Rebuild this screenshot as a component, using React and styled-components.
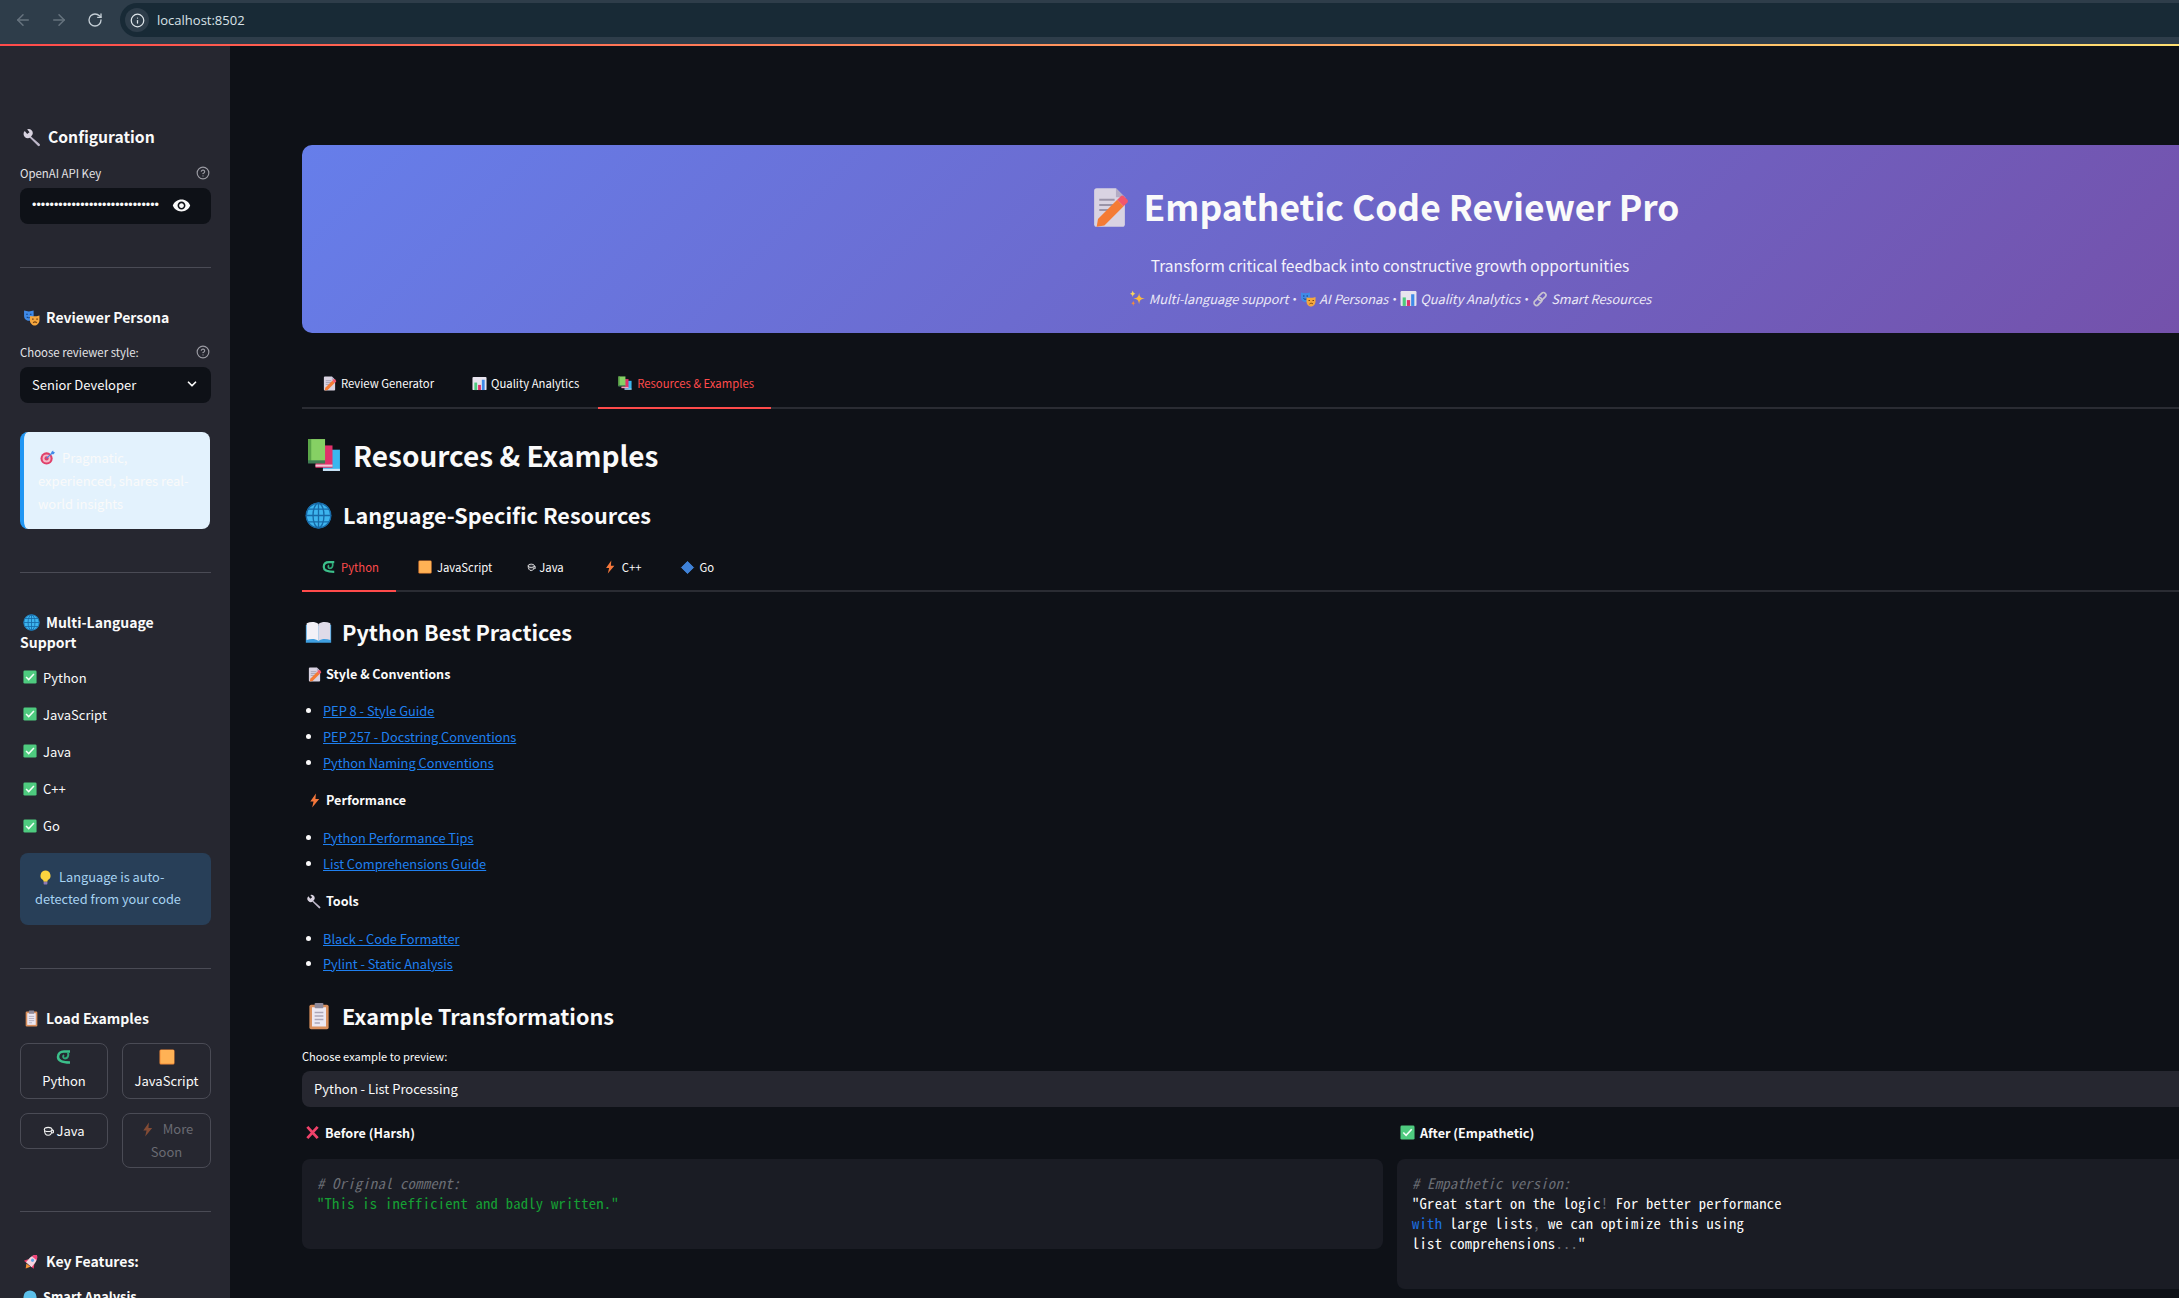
import React from 'react'
import styled, { createGlobalStyle } from 'styled-components'
import { ArrowLeft, ArrowRight, RotateCw, Info, CircleHelp, ChevronDown } from 'lucide-react'
import { MdVisibility } from 'react-icons/md'

const GlobalStyle = createGlobalStyle`
    html, body {
        margin: 0;
        padding: 0;
        height: 100%;
        overflow: hidden;
        background: #0e1117;
    }
    body {
        font-family: "Noto Sans CJK SC", "Noto Sans", sans-serif;
        color: #fafafa;
    }
    * {
        box-sizing: border-box;
    }
`

const Page = styled.div`
    width: 2179px;
    height: 1298px;
    display: flex;
    flex-direction: column;
    overflow: hidden;
`

/* browser chrome */
const Chrome = styled.div`
    height: 44px;
    flex: none;
    display: flex;
    align-items: flex-start;
    padding: 3px 0 0 5px;
    background: #2e3d4a;
`
const NavButton = styled.div`
    width: 36px;
    height: 34px;
    display: flex;
    align-items: center;
    justify-content: center;
    color: ${p => (p.$dim ? '#66737e' : '#c4ced5')};
`
const AddressBar = styled.div`
    flex: 1;
    height: 34px;
    margin-left: 7px;
    display: flex;
    align-items: center;
    gap: 8px;
    padding-left: 5px;
    border-radius: 17px 0 0 17px;
    background: #182a36;
    color: #d8e2e8;
    font-family: "Open Sans", sans-serif;
    font-size: 13px;
`
const SiteInfo = styled.div`
    width: 24px;
    height: 24px;
    border-radius: 50%;
    display: flex;
    align-items: center;
    justify-content: center;
    background: #2e3d4a;
    color: #dfe6ea;
`
const Decoration = styled.div`
    height: 2px;
    flex: none;
    background: linear-gradient(90deg, #ff4b4b, #ffe072);
`

const Body = styled.div`
    flex: 1;
    display: flex;
    min-height: 0;
`

/* sidebar */
const Sidebar = styled.aside`
    width: 230px;
    flex: none;
    padding: 81px 19px 0 20px;
    overflow: hidden;
    background: #262730;
`
const SideHeading = styled.div`
    font-size: ${p => p.$size || 14}px;
    line-height: 20px;
    font-weight: 700;
`
const LabelRow = styled.div`
    display: flex;
    align-items: center;
    justify-content: space-between;
    height: 16px;
    margin-top: ${p => p.$top || 17}px;
    padding-right: 1px;
    font-size: 11.4px;
    color: #e3e3e6;
    svg {
        color: #9b9ba3;
    }
`
const DarkField = styled.div`
    height: 36px;
    margin-top: 7px;
    display: flex;
    align-items: center;
    justify-content: space-between;
    padding: 0 ${p => p.$right || 12}px 2px 12px;
    border-radius: 8px;
    background: #0e1117;
    font-size: 13px;
`
const Dots = styled.span`
    width: 127px;
    overflow: hidden;
    white-space: nowrap;
    font-family: "Liberation Sans", sans-serif;
    font-size: 12.5px;
`
const Rule = styled.hr`
    height: 1px;
    margin: 43px 0 39px;
    border: 0;
    background: #4a4b55;
`
const PersonaCard = styled.div`
    margin: 29px 1px 1px 0;
    padding: 14px;
    border-left: 4px solid #2196f3;
    border-radius: 8px;
    background: #e3f2fd;
    color: #fafafa;
    font-size: 13px;
    line-height: 23px;
`
const LanguageList = styled.div`
    display: flex;
    flex-direction: column;
    gap: 17.2px;
    margin-top: 15px;
`
const LanguageRow = styled.div`
    display: flex;
    align-items: center;
    height: 20px;
    padding-left: 3px;
    gap: 6px;
    font-size: 13px;
`
const InfoBox = styled.div`
    margin-top: 17px;
    height: 72px;
    padding: 13px 15px;
    border-radius: 8px;
    background: #283f58;
    color: #a7d3f2;
    font-size: 12.8px;
    line-height: 22px;
`
const ButtonGrid = styled.div`
    display: grid;
    grid-template-columns: 88px 89px;
    gap: 14px;
    align-items: start;
    margin-top: 15px;
`
const SideButton = styled.div`
    display: flex;
    flex-direction: column;
    align-items: center;
    justify-content: center;
    min-height: ${p => p.$height}px;
    border: 1px solid #4a4b55;
    border-radius: 8px;
    color: ${p => (p.$disabled ? '#6a6b73' : '#fafafa')};
    font-size: 13px;
    line-height: 23px;
    text-align: center;
`
const ButtonIcon = styled.div`
    height: 16px;
    margin-bottom: 4px;
    line-height: 0;
`
const FeatureRow = styled.div`
    margin-top: 16px;
    font-size: 12.8px;
    font-weight: 700;
    line-height: 20px;
`

/* main column */
const Main = styled.main`
    flex: 1;
    min-width: 0;
    overflow: hidden;
    padding: 99px 0 0 72px;
`
const Content = styled.div`
    width: 2176px;
`
const Hero = styled.header`
    height: 188px;
    padding-top: 37px;
    border-radius: 10px;
    background: linear-gradient(135deg, #667eea 0%, #764ba2 100%);
    text-align: center;
`
const HeroTitle = styled.h1`
    margin: 0;
    padding-right: 12px;
    font-size: 35.4px;
    line-height: 48px;
    font-weight: 700;
`
const HeroSub = styled.p`
    margin: 23px 0 0;
    font-size: 15.5px;
    line-height: 24px;
    color: #f4f2fb;
`
const HeroFeatures = styled.p`
    margin: 12px 0 0;
    font-size: 12.8px;
    line-height: 20px;
    font-style: italic;
    color: #ece9f7;
`
const Separator = styled.span`
    display: inline-block;
    width: 12px;
    text-align: center;
    font-style: normal;
`
const TabBar = styled.nav`
    display: flex;
    gap: 2px;
    height: ${p => p.$height}px;
    margin-top: ${p => p.$top}px;
    border-bottom: 2px solid #2a2c33;
`
const Tab = styled.div`
    height: calc(100% + 2px);
    display: flex;
    align-items: center;
    padding: 0 17px 0 ${p => p.$left || 20}px;
    border-bottom: 2px solid ${p => (p.$active ? '#ff4b4b' : 'transparent')};
    color: ${p => (p.$active ? '#ff4b4b' : '#fafafa')};
    font-size: 11.3px;
    white-space: nowrap;
`
const PageTitle = styled.h1`
    margin: 24px 0 0 5px;
    font-size: 28px;
    line-height: 44px;
    font-weight: 700;
`
const SectionTitle = styled.h2`
    margin: ${p => p.$top}px 0 0 3px;
    font-size: ${p => p.$size}px;
    line-height: ${p => p.$line}px;
    font-weight: 700;
`
const GroupTitle = styled.h4`
    margin: ${p => p.$top}px 0 0 5px;
    font-size: 12.6px;
    line-height: 20px;
    font-weight: 700;
`
const Links = styled.ul`
    display: flex;
    flex-direction: column;
    gap: ${p => p.$gap || 6}px;
    margin: ${p => p.$top}px 0 0;
    padding-left: 21px;
    list-style: disc;
`
const LinkItem = styled.li`
    font-size: 12.8px;
    line-height: 20px;
    a {
        color: #1f80f0;
    }
`
const PreviewLabel = styled.label`
    display: block;
    margin-top: 16px;
    font-size: 11.1px;
    line-height: 16px;
`
const PreviewSelect = styled.div`
    height: 36px;
    margin-top: 7px;
    display: flex;
    align-items: center;
    padding: 0 0 2px 12px;
    border-radius: 8px;
    background: #262730;
    font-size: 13px;
`
const Columns = styled.div`
    display: grid;
    grid-template-columns: 1081px 1081px;
    gap: 14px;
    align-items: start;
    margin-top: 16px;
`
const ColumnTitle = styled.div`
    padding-left: 3px;
    font-size: 12.6px;
    line-height: 20px;
    font-weight: 700;
`
const CodeBlock = styled.pre`
    margin: 16px 0 0;
    padding: 14px 15px 36px;
    border-radius: 8px;
    background: #1a1c24;
    font-family: "Noto Sans Mono CJK SC", "DejaVu Sans Mono", monospace;
    font-size: 14.6px;
    letter-spacing: 0.25px;
    line-height: 20px;
    color: #fafafa;
`
const Comment = styled.span`
    font-style: italic;
    color: #6b6e75;
`
const Str = styled.span`
    color: #16a034;
`
const Keyword = styled.span`
    color: #1c6fe0;
`
const Punct = styled.span`
    color: #6b6e75;
`

/* emoji drawings */
const Glyph = styled.svg`
    display: inline-block;
    flex: none;
    width: ${p => p.$size}px;
    height: ${p => p.$size}px;
    margin-left: ${p => p.$lead || 0}px;
    margin-right: ${p => p.$gap || 0}px;
    vertical-align: ${p => p.$drop ?? -2}px;
    opacity: ${p => p.$fade || 1};
`
const emoji = shapes => ({ size = 14, gap, drop, fade, lead }) => (
    <Glyph viewBox="0 0 32 32" $size={size} $gap={gap} $drop={drop} $fade={fade} $lead={lead}>
        {shapes}
    </Glyph>
)

const Memo = emoji(<>
    <path d="M6 1h15l7 7v21a2 2 0 0 1-2 2H6a2 2 0 0 1-2-2V3a2 2 0 0 1 2-2z" fill="#d9d3e2" />
    <path d="M21 1l7 7h-7z" fill="#b3abc4" />
    <path d="M8 10h12M8 14h13M8 18h9" stroke="#9a94a8" strokeWidth="1.6" />
    <path d="M7 25l15-15 5 5-15 15-6 1z" fill="#f47b35" />
    <path d="M22 10l3-3a1.5 1.5 0 0 1 2 0l3 3a1.5 1.5 0 0 1 0 2l-3 3z" fill="#f2566c" />
</>)
const Wrench = emoji(<>
    <path d="M13 14l15 13a2 2 0 0 1-3 3L11 16z" fill="#bdb7c9" />
    <path d="M3 5l4 5 4-3-4-5a7 7 0 0 1 9 9l-3 4a7 7 0 0 1-10-10z" fill="#d8d3e0" />
</>)
const Masks = emoji(<>
    <path d="M2 3c6 2 12 2 18 0v10c0 6-5 9-9 9s-9-3-9-9z" fill="#3f8ae8" />
    <path d="M6 10h3M13 10h3M7 15c2 2 6 2 8 0" stroke="#123f7a" strokeWidth="2" fill="none" />
    <path d="M13 13c6 1 12 1 18-1v9c0 6-5 10-9 10s-9-4-9-10z" fill="#f6a73e" />
    <path d="M17 19h3M25 19h3M19 26c2-2 5-2 7 0" stroke="#7a4510" strokeWidth="2" fill="none" />
</>)
const Target = emoji(<>
    <circle cx="14" cy="18" r="13" fill="#e0406a" />
    <circle cx="14" cy="18" r="8.5" fill="#f5b9c8" />
    <circle cx="14" cy="18" r="4.5" fill="#e0406a" />
    <path d="M14 18L27 5" stroke="#3f8ae8" strokeWidth="2.5" />
    <path d="M24 4l4-3 1 3 3 1-3 4h-4z" fill="#3f8ae8" />
</>)
const Globe = emoji(<>
    <circle cx="16" cy="16" r="15" fill="#3db4ee" />
    <g stroke="#176aa8" strokeWidth="1.6" fill="none">
        <circle cx="16" cy="16" r="14.5" />
        <ellipse cx="16" cy="16" rx="6.5" ry="14.5" />
        <path d="M16 1v30M1 16h30M3.5 8.5h25M3.5 23.5h25" />
    </g>
</>)
const Check = emoji(<>
    <rect x="1" y="1" width="30" height="30" rx="3" fill="#4ecb7f" />
    <path d="M7 16l6 6 12-13" stroke="#f4fff8" strokeWidth="3.4" fill="none" />
</>)
const Bulb = emoji(<>
    <path d="M16 1a11 11 0 0 0-6 20c1 1 2 2 2 4h8c0-2 1-3 2-4a11 11 0 0 0-6-20z" fill="#fcd53f" />
    <rect x="12" y="25" width="8" height="6" rx="1.5" fill="#8d7ab5" />
</>)
const Clipboard = emoji(<>
    <rect x="5" y="3" width="22" height="28" rx="2" fill="#d98f5c" />
    <rect x="8" y="6" width="16" height="22" fill="#ece8f2" />
    <rect x="11" y="1" width="10" height="6" rx="1" fill="#8f8a9a" />
    <path d="M11 12h10M11 16h10M11 20h10M11 24h6" stroke="#aca6b8" strokeWidth="1.5" />
</>)
const Snake = emoji(<>
    <path d="M28 5H16C9 5 4 9 4 16c0 7 7 11 24 11" stroke="#3cc08b" strokeWidth="5" fill="none" />
    <path d="M24 7c2 7-1 12-6 12-4 0-5-5-2-7" stroke="#2fa878" strokeWidth="4" fill="none" />
</>)
const OrangeSquare = emoji(<>
    <rect x="1" y="1" width="30" height="30" rx="3" fill="#f28c38" />
    <rect x="3" y="2" width="27" height="27" rx="2" fill="#ffb255" />
</>)
const Cup = emoji(<>
    <g stroke="#f2f2f2" strokeWidth="3" fill="#30323a">
        <path d="M4 10c0 10 4 17 11 17s11-7 11-17z" />
        <ellipse cx="15" cy="10" rx="11" ry="6" />
        <path d="M26 12h1a4 4 0 0 1 0 8h-3" fill="none" />
    </g>
</>)
const Bolt = emoji(<path d="M19 1L7 18h7l-3 13 15-18h-8z" fill="#f4773b" />)
const Diamond = emoji(<path d="M16 3l13 13-13 13L3 16z" fill="#3f82d8" stroke="#3f82d8" strokeWidth="2" strokeLinejoin="round" />)
const Rocket = emoji(<g transform="rotate(40 16 16)">
    <path d="M11 25h10l-5 8z" fill="#f79233" />
    <path d="M9 16l-5 8h6zM23 16l5 8h-6z" fill="#ef3d6e" />
    <path d="M16 0c5 4 7 10 7 15v9H9v-9c0-5 2-11 7-15z" fill="#f7d3df" />
    <path d="M16 0c3 2 5 5 6 8H10c1-3 3-6 6-8z" fill="#f0447a" />
    <circle cx="16" cy="13" r="3" fill="#62a8e8" />
</g>)
const BlueDot = emoji(<circle cx="16" cy="16" r="15" fill="#5cc0ea" />)
const Books = emoji(<>
    <rect x="15" y="11" width="16" height="20" fill="#3ab6ee" />
    <path d="M15 29h16v2H15z" fill="#cfe4f5" />
    <rect x="8" y="7" width="16" height="21" fill="#e0316a" />
    <path d="M8 25h16v2H8z" fill="#f1c7d6" />
    <rect x="1" y="1" width="16" height="22" fill="#86d064" />
    <rect x="1" y="1" width="3" height="22" fill="#5aa548" />
    <path d="M1 21h16v3H1z" fill="#3f7a54" />
</>)
const Chart = emoji(<>
    <rect x="1" y="2" width="30" height="28" rx="2" fill="#e8e4ee" />
    <rect x="5" y="14" width="6" height="16" fill="#4ecb7f" />
    <rect x="13" y="19" width="6" height="11" fill="#e0316a" />
    <rect x="21" y="8" width="6" height="22" fill="#3f8ae8" />
</>)
const Sparkles = emoji(<>
    <path d="M19 5c1 8 3 10 11 11-8 1-10 3-11 11-1-8-3-10-11-11 8-1 10-3 11-11z" fill="#fcb93f" />
    <path d="M7 1c1 4 2 5 5 6-3 1-4 2-5 6-1-4-2-5-5-6 3-1 4-2 5-6z" fill="#f9d65a" />
    <path d="M8 20c.7 3 1.5 4 4 5-2.5.7-3.3 2-4 5-.7-3-1.5-4.3-4-5 2.5-1 3.3-2 4-5z" fill="#f58a3c" />
</>)
const Chain = emoji(<g stroke="#c8c4d0" strokeWidth="3.4" fill="none">
    <rect x="15" y="2" width="10" height="18" rx="5" transform="rotate(45 20 11)" />
    <rect x="7" y="12" width="10" height="18" rx="5" transform="rotate(45 12 21)" />
</g>)
const OpenBook = emoji(<>
    <path d="M1 7c5-2 11-2 15 1 4-3 10-3 15-1v21H1z" fill="#3f9fe0" />
    <path d="M2 5c5-2 10-2 14 1v20c-4-3-9-3-14-1z" fill="#f3f1f7" />
    <path d="M30 5c-5-2-10-2-14 1v20c4-3 9-3 14-1z" fill="#dfdbe8" />
</>)
const Cross = emoji(<path d="M5 4l22 24M27 4L5 28" stroke="#f0426a" strokeWidth="6" />)

const languages = ['Python', 'JavaScript', 'Java', 'C++', 'Go']
const dots = '•'.repeat(29)

export default function App() {
    return (
        <Page>
            <GlobalStyle />
            <Chrome>
                <NavButton $dim><ArrowLeft size={18} /></NavButton>
                <NavButton $dim><ArrowRight size={18} /></NavButton>
                <NavButton><RotateCw size={16} /></NavButton>
                <AddressBar>
                    <SiteInfo><Info size={15} /></SiteInfo>
                    localhost:8502
                </AddressBar>
            </Chrome>
            <Decoration />
            <Body>
                <Sidebar>
                    <SideHeading $size={15.7}><Wrench size={19} lead={3} gap={6} drop={-4} />Configuration</SideHeading>
                    <LabelRow $top={18}>OpenAI API Key<CircleHelp size={14} /></LabelRow>
                    <DarkField $right={20}>
                        <Dots>{dots}</Dots>
                        <MdVisibility size={19} />
                    </DarkField>
                    <Rule />

                    <SideHeading><Masks size={17} lead={3} gap={6} drop={-3} />Reviewer Persona</SideHeading>
                    <LabelRow>Choose reviewer style:<CircleHelp size={14} /></LabelRow>
                    <DarkField>
                        Senior Developer
                        <ChevronDown size={14} strokeWidth={3} />
                    </DarkField>
                    <PersonaCard><Target size={15} lead={2} gap={7} />Pragmatic, experienced, shares real-world insights</PersonaCard>
                    <Rule />

                    <SideHeading><Globe size={17} lead={3} gap={6} drop={-3} />Multi-Language Support</SideHeading>
                    <LanguageList>
                        {languages.map(name => (
                            <LanguageRow key={name}><Check size={14} />{name}</LanguageRow>
                        ))}
                    </LanguageList>
                    <InfoBox><Bulb size={15} lead={3} gap={6} drop={-3} />Language is auto-detected from your code</InfoBox>
                    <Rule />

                    <SideHeading><Clipboard size={17} lead={3} gap={6} drop={-3} />Load Examples</SideHeading>
                    <ButtonGrid>
                        <SideButton $height={56}>
                            <ButtonIcon><Snake size={16} /></ButtonIcon>
                            Python
                        </SideButton>
                        <SideButton $height={56}>
                            <ButtonIcon><OrangeSquare size={16} /></ButtonIcon>
                            JavaScript
                        </SideButton>
                        <SideButton $height={36}>
                            <span><Cup size={11} gap={2} drop={-1} />Java</span>
                        </SideButton>
                        <SideButton $height={55} $disabled>
                            <span><Bolt size={15} gap={8} fade={0.45} drop={-3} />More</span>
                            <span>Soon</span>
                        </SideButton>
                    </ButtonGrid>
                    <Rule />

                    <SideHeading><Rocket size={17} lead={3} gap={6} drop={-3} />Key Features:</SideHeading>
                    <FeatureRow><BlueDot size={14} lead={3} gap={6} />Smart Analysis</FeatureRow>
                </Sidebar>

                <Main>
                    <Content>
                        <Hero>
                            <HeroTitle><Memo size={41} gap={14} drop={-7} />Empathetic Code Reviewer Pro</HeroTitle>
                            <HeroSub>Transform critical feedback into constructive growth opportunities</HeroSub>
                            <HeroFeatures>
                                <Sparkles size={17} gap={3} drop={-3} />Multi-language support<Separator>•</Separator>
                                <Masks size={16} gap={3} drop={-3} />AI Personas<Separator>•</Separator>
                                <Chart size={17} gap={3} drop={-3} />Quality Analytics<Separator>•</Separator>
                                <Chain size={16} gap={3} drop={-3} />Smart Resources
                            </HeroFeatures>
                        </Hero>

                        <TabBar $height={50} $top={26}>
                            <Tab><Memo size={15} gap={4} />Review Generator</Tab>
                            <Tab $left={19}><Chart size={15} gap={4} />Quality Analytics</Tab>
                            <Tab $active><Books size={14} gap={5} />Resources &amp; Examples</Tab>
                        </TabBar>

                        <PageTitle><Books size={34} gap={12} drop={-5} />Resources &amp; Examples</PageTitle>
                        <SectionTitle $top={20} $size={21.6} $line={36}><Globe size={27} gap={11} drop={-5} />Language-Specific Resources</SectionTitle>

                        <TabBar $height={48} $top={11}>
                            <Tab $active><Snake size={14} gap={5} />Python</Tab>
                            <Tab><OrangeSquare size={14} gap={5} />JavaScript</Tab>
                            <Tab $left={16}><Cup size={9} gap={3} />Java</Tab>
                            <Tab><Bolt size={14} gap={5} />C++</Tab>
                            <Tab><Diamond size={15} gap={4} />Go</Tab>
                        </TabBar>

                        <SectionTitle $top={24} $size={21.6} $line={32}><OpenBook size={27} gap={10} drop={-5} />Python Best Practices</SectionTitle>

                        <GroupTitle $top={16}><Memo size={15} gap={4} drop={-3} />Style &amp; Conventions</GroupTitle>
                        <Links $top={17}>
                            <LinkItem><a href="#pep8">PEP 8 - Style Guide</a></LinkItem>
                            <LinkItem><a href="#pep257">PEP 257 - Docstring Conventions</a></LinkItem>
                            <LinkItem><a href="#naming">Python Naming Conventions</a></LinkItem>
                        </Links>

                        <GroupTitle $top={17}><Bolt size={15} gap={4} drop={-3} />Performance</GroupTitle>
                        <Links $top={18}>
                            <LinkItem><a href="#tips">Python Performance Tips</a></LinkItem>
                            <LinkItem><a href="#comprehensions">List Comprehensions Guide</a></LinkItem>
                        </Links>

                        <GroupTitle $top={17}><Wrench size={15} gap={4} drop={-3} />Tools</GroupTitle>
                        <Links $top={18} $gap={5}>
                            <LinkItem><a href="#black">Black - Code Formatter</a></LinkItem>
                            <LinkItem><a href="#pylint">Pylint - Static Analysis</a></LinkItem>
                        </Links>

                        <SectionTitle $top={26} $size={21.6} $line={32}><Clipboard size={28} gap={9} drop={-5} />Example Transformations</SectionTitle>

                        <PreviewLabel>Choose example to preview:</PreviewLabel>
                        <PreviewSelect>Python - List Processing</PreviewSelect>

                        <Columns>
                            <div>
                                <ColumnTitle><Cross size={15} gap={5} />Before (Harsh)</ColumnTitle>
                                <CodeBlock>
                                    <Comment># Original comment:</Comment>{'\n'}
                                    <Str>"This is inefficient and badly written."</Str>
                                </CodeBlock>
                            </div>
                            <div>
                                <ColumnTitle><Check size={15} gap={5} />After (Empathetic)</ColumnTitle>
                                <CodeBlock>
                                    <Comment># Empathetic version:</Comment>{'\n'}
                                    "Great start on the logic<Punct>!</Punct> For better performance{'\n'}
                                    <Keyword>with</Keyword> large lists<Punct>,</Punct> we can optimize this using{'\n'}
                                    list comprehensions<Punct>...</Punct>"
                                </CodeBlock>
                            </div>
                        </Columns>
                    </Content>
                </Main>
            </Body>
        </Page>
    )
}
